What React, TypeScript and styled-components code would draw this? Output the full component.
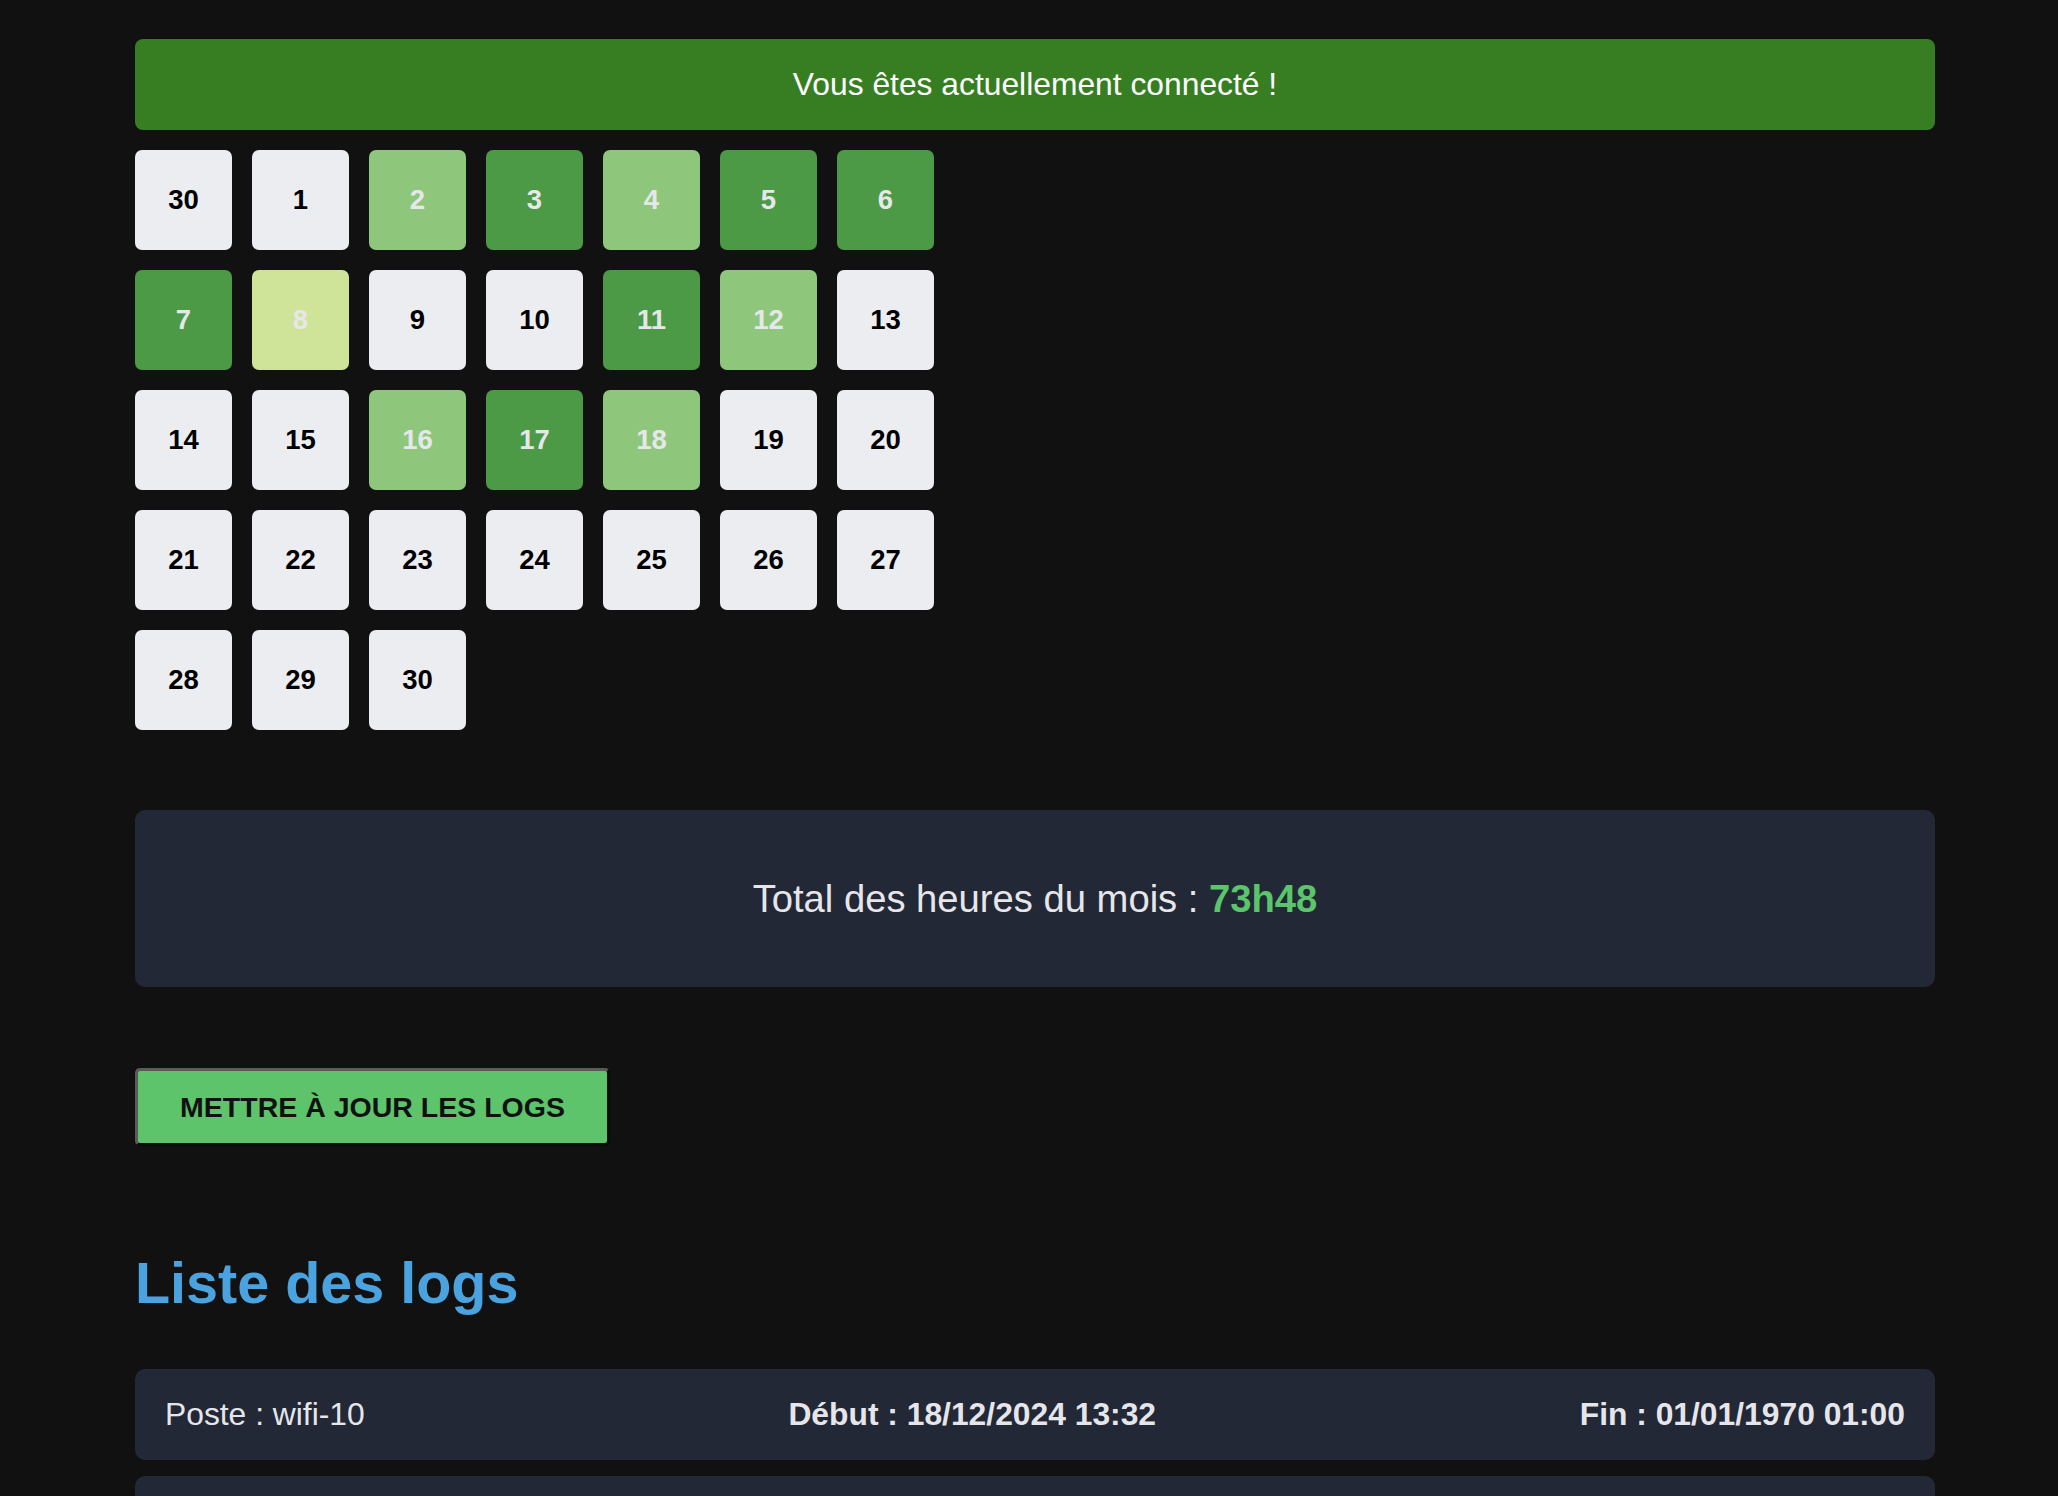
import React from "react";
import styled, { createGlobalStyle } from "styled-components";

const GlobalStyle = createGlobalStyle`
  html, body {
    margin: 0;
    padding: 0;
    background: #111111;
    font-family: "Liberation Sans", Arial, Helvetica, sans-serif;
  }
`;

const Page = styled.main`
  padding: 39px 0 40px 135px;
  width: 1800px;
`;

const Banner = styled.div`
  height: 91px;
  border-radius: 8px;
  background: #377e22;
  color: #ffffff;
  font-size: 31.8px;
  display: flex;
  align-items: center;
  justify-content: center;
`;

const Calendar = styled.div`
  margin-top: 20px;
  display: grid;
  grid-template-columns: repeat(7, 97px);
  grid-auto-rows: 100px;
  column-gap: 20px;
  row-gap: 20px;
`;

type Level = "none" | "low" | "mid" | "high";

const levelBg: Record<Level, string> = {
  none: "#ecedf1",
  low: "#cfe498",
  mid: "#8ec77c",
  high: "#4c9946",
};

const Day = styled.div<{ $level: Level }>`
  border-radius: 7px;
  background: ${(p) => levelBg[p.$level]};
  color: ${(p) => (p.$level === "none" ? "#000000" : "#e6e7ea")};
  font-size: 27.5px;
  font-weight: 700;
  display: flex;
  align-items: center;
  justify-content: center;
`;

const TotalBox = styled.div`
  margin-top: 80px;
  height: 177px;
  border-radius: 10px;
  background: #222836;
  color: #e6e6ea;
  font-size: 38.2px;
  display: flex;
  align-items: center;
  justify-content: center;
`;

const TotalValue = styled.strong`
  color: #5cc46a;
  font-weight: 700;
`;

const UpdateButton = styled.button`
  margin-top: 81px;
  display: block;
  width: 475px;
  height: 78px;
  padding: 0;
  box-sizing: border-box;
  border-style: solid;
  border-width: 3px;
  border-color: #5a5a5a #0a0a0a #0a0a0a #5a5a5a;
  border-radius: 5px;
  background: #5ec46b;
  color: #111111;
  font-family: "Liberation Sans", Arial, sans-serif;
  font-size: 28.5px;
  font-weight: 700;
  letter-spacing: 0;
  text-transform: uppercase;
  cursor: pointer;
`;

const Heading = styled.h2`
  margin: 104px 0 0 0;
  font-size: 57.5px;
  line-height: 66px;
  font-weight: 700;
  color: #4aa3df;
`;

const LogList = styled.div`
  margin-top: 53px;
  display: flex;
  flex-direction: column;
  gap: 16px;
`;

const LogRow = styled.div`
  height: 91px;
  border-radius: 10px;
  background: #222836;
  color: #e6e6ea;
  font-size: 31.8px;
  padding: 0 30px;
  display: flex;
  align-items: center;
  justify-content: space-between;
`;

const LogCell = styled.span<{ $bold?: boolean }>`
  font-weight: ${(p) => (p.$bold ? 700 : 400)};
`;

const days: { label: number; level: Level }[] = [
  { label: 30, level: "none" },
  { label: 1, level: "none" },
  { label: 2, level: "mid" },
  { label: 3, level: "high" },
  { label: 4, level: "mid" },
  { label: 5, level: "high" },
  { label: 6, level: "high" },
  { label: 7, level: "high" },
  { label: 8, level: "low" },
  { label: 9, level: "none" },
  { label: 10, level: "none" },
  { label: 11, level: "high" },
  { label: 12, level: "mid" },
  { label: 13, level: "none" },
  { label: 14, level: "none" },
  { label: 15, level: "none" },
  { label: 16, level: "mid" },
  { label: 17, level: "high" },
  { label: 18, level: "mid" },
  ...Array.from({ length: 12 }, (_, i) => ({ label: 19 + i, level: "none" as Level })),
];

const logs = [
  { poste: "wifi-10", debut: "18/12/2024 13:32", fin: "01/01/1970 01:00" },
  { poste: "wifi-10", debut: "18/12/2024 09:14", fin: "18/12/2024 12:47" },
  { poste: "wifi-08", debut: "17/12/2024 13:05", fin: "17/12/2024 18:21" },
];

export default function App() {
  return (
    <>
      <GlobalStyle />
      <Page>
        <Banner>Vous êtes actuellement connecté !</Banner>
        <Calendar>
          {days.map((d, i) => (
            <Day key={i} $level={d.level}>
              {d.label}
            </Day>
          ))}
        </Calendar>
        <TotalBox>
          <span>
            Total des heures du mois : <TotalValue>73h48</TotalValue>
          </span>
        </TotalBox>
        <UpdateButton>Mettre à jour les logs</UpdateButton>
        <Heading>Liste des logs</Heading>
        <LogList>
          {logs.map((l, i) => (
            <LogRow key={i}>
              <LogCell>Poste : {l.poste}</LogCell>
              <LogCell $bold>Début : {l.debut}</LogCell>
              <LogCell $bold>Fin : {l.fin}</LogCell>
            </LogRow>
          ))}
        </LogList>
      </Page>
    </>
  );
}
